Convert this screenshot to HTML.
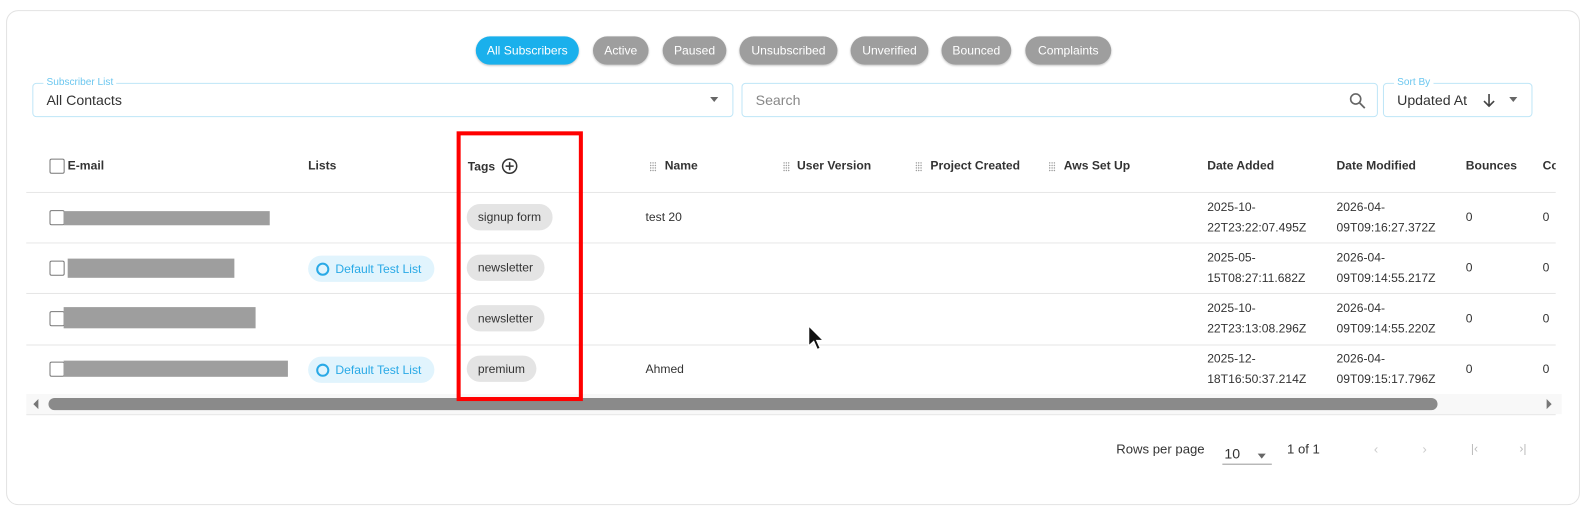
<!DOCTYPE html>
<html><head><meta charset="utf-8"><style>
html,body{margin:0;padding:0;background:#fff;width:1584px;height:513px;overflow:hidden}
#w{position:absolute;left:0;top:0;width:1568px;height:508px;transform:scale(1.0102);transform-origin:0 0;font-family:"Liberation Sans",sans-serif;color:#222}
.a{position:absolute}
.card{left:6px;top:10px;width:1556px;height:488px;border:1px solid #e2e2e2;border-radius:12px}
.chip{top:36px;height:28px;line-height:28px;border-radius:14px;background:#9e9e9e;color:#fff;font-size:12px;text-align:center;box-shadow:0 1px 2px rgba(0,0,0,.25)}
.inp{top:82px;height:34px;border:1px solid #bfe6f7;border-radius:4px;box-sizing:border-box}
.lbl{font-size:10px;color:#6cc7ef;background:#fff;padding:0 3px;top:-7px;position:absolute}
.h{top:157px;font-size:12px;font-weight:bold;color:#333}
.line{height:1px;background:#e6e6e6;left:26px;width:1514px}
.cb{width:13px;height:13px;border:1.5px solid #777;border-radius:2px}
.red{background:#9e9e9e}
.tag{height:26px;line-height:26px;border-radius:13px;background:#e4e4e4;font-size:12px;color:#333;padding:0 11px;left:462px}
.lst{left:305px;height:26px;line-height:26px;border-radius:13px;background:#e1f4fd;color:#29a9e6;font-size:12px;padding:0 13px 0 27px}
.lst:before{content:"";position:absolute;left:8px;top:7px;width:9px;height:9px;border:2px solid #29a9e6;border-radius:50%}
.t{font-size:12px;color:#333}
.d{font-size:12px;color:#333;line-height:20px}
.grip{width:7px;height:10px;background-image:radial-gradient(#999 0.6px,transparent 0.7px);background-size:2.3px 2.5px;top:160px}
</style></head><body><div id="w">
<div class="a card"></div>
<div class="a chip" style="left:471px;width:102px;background:#1ab0ec">All Subscribers</div>
<div class="a chip" style="left:587px;width:55px">Active</div>
<div class="a chip" style="left:656px;width:63px">Paused</div>
<div class="a chip" style="left:732px;width:97px">Unsubscribed</div>
<div class="a chip" style="left:842px;width:77px">Unverified</div>
<div class="a chip" style="left:932px;width:69px">Bounced</div>
<div class="a chip" style="left:1015px;width:85px">Complaints</div>

<div class="a inp" style="left:32px;width:694px"><span class="lbl" style="left:10px">Subscriber List</span><span class="a" style="left:13px;top:8px;font-size:14px;color:#333">All Contacts</span><span class="a" style="right:14px;top:13px;border:4px solid transparent;border-top:5px solid #666;border-bottom:0"></span></div>
<div class="a inp" style="left:734px;width:630px"><span class="a" style="left:13px;top:8px;font-size:14px;color:#888">Search</span>
<svg class="a" style="right:10px;top:8px" width="18" height="18" viewBox="0 0 18 18"><circle cx="7" cy="7" r="5" fill="none" stroke="#666" stroke-width="1.6"/><path d="M11 11l5 5" stroke="#666" stroke-width="1.8"/></svg></div>
<div class="a inp" style="left:1369px;width:148px"><span class="lbl" style="left:10px">Sort By</span><span class="a" style="left:13px;top:8px;font-size:14px;color:#333">Updated At</span>
<svg class="a" style="left:97px;top:9px" width="14" height="15" viewBox="0 0 14 15"><path d="M7 1v12M2 8l5 5 5-5" fill="none" stroke="#444" stroke-width="1.6"/></svg>
<span class="a" style="right:14px;top:13px;border:4px solid transparent;border-top:5px solid #666;border-bottom:0"></span></div>

<div class="a cb" style="left:49px;top:157px"></div>
<div class="a h" style="left:67px">E-mail</div>
<div class="a h" style="left:305px">Lists</div>
<div class="a h" style="left:463px;top:158px">Tags</div>
<svg class="a" style="left:496px;top:156px" width="17" height="17" viewBox="0 0 17 17"><circle cx="8.5" cy="8.5" r="7" fill="none" stroke="#333" stroke-width="1.5"/><path d="M8.5 4.5v8M4.5 8.5h8" stroke="#333" stroke-width="1.5"/></svg>
<div class="a grip" style="left:643px"></div><div class="a h" style="left:658px">Name</div>
<div class="a grip" style="left:775px"></div><div class="a h" style="left:789px">User Version</div>
<div class="a grip" style="left:906px"></div><div class="a h" style="left:921px">Project Created</div>
<div class="a grip" style="left:1038px"></div><div class="a h" style="left:1053px">Aws Set Up</div>
<div class="a h" style="left:1195px">Date Added</div>
<div class="a h" style="left:1323px">Date Modified</div>
<div class="a h" style="left:1451px">Bounces</div>
<div class="a h" style="left:1527px;width:13px;overflow:hidden">Complaints</div>

<div class="a line" style="top:190px"></div>
<div class="a line" style="top:240px"></div>
<div class="a line" style="top:290px"></div>
<div class="a line" style="top:341px"></div>

<div class="a cb" style="left:49px;top:208px"></div><div class="a red" style="left:63px;top:209px;width:204px;height:14px"></div>
<div class="a cb" style="left:49px;top:258px"></div><div class="a red" style="left:67px;top:256px;width:165px;height:19px"></div>
<div class="a cb" style="left:49px;top:308px"></div><div class="a red" style="left:63px;top:304px;width:190px;height:21px"></div>
<div class="a cb" style="left:49px;top:358px"></div><div class="a red" style="left:63px;top:357px;width:222px;height:16px"></div>

<div class="a lst" style="top:253px">Default Test List</div>
<div class="a lst" style="top:353px">Default Test List</div>

<div class="a tag" style="top:202px">signup form</div>
<div class="a tag" style="top:252px">newsletter</div>
<div class="a tag" style="top:302px">newsletter</div>
<div class="a tag" style="top:352px">premium</div>

<div class="a t" style="left:639px;top:208px">test 20</div>
<div class="a t" style="left:639px;top:358px">Ahmed</div>

<div class="a d" style="left:1195px;top:195px">2025-10-<br>22T23:22:07.495Z</div>
<div class="a d" style="left:1323px;top:195px">2026-04-<br>09T09:16:27.372Z</div>
<div class="a d" style="left:1195px;top:245px">2025-05-<br>15T08:27:11.682Z</div>
<div class="a d" style="left:1323px;top:245px">2026-04-<br>09T09:14:55.217Z</div>
<div class="a d" style="left:1195px;top:295px">2025-10-<br>22T23:13:08.296Z</div>
<div class="a d" style="left:1323px;top:295px">2026-04-<br>09T09:14:55.220Z</div>
<div class="a d" style="left:1195px;top:345px">2025-12-<br>18T16:50:37.214Z</div>
<div class="a d" style="left:1323px;top:345px">2026-04-<br>09T09:15:17.796Z</div>
<div class="a t" style="left:1451px;top:208px">0</div><div class="a t" style="left:1527px;top:208px">0</div>
<div class="a t" style="left:1451px;top:258px">0</div><div class="a t" style="left:1527px;top:258px">0</div>
<div class="a t" style="left:1451px;top:308px">0</div><div class="a t" style="left:1527px;top:308px">0</div>
<div class="a t" style="left:1451px;top:358px">0</div><div class="a t" style="left:1527px;top:358px">0</div>

<div class="a" style="left:26px;top:390px;width:1520px;height:20px;background:#f8f8f8"></div>
<div class="a" style="left:33px;top:395px;border:5px solid transparent;border-right:5px solid #777;border-left:0"></div>
<div class="a" style="left:1531px;top:395px;border:5px solid transparent;border-left:5px solid #777;border-right:0"></div>
<div class="a" style="left:48px;top:394px;width:1375px;height:12px;border-radius:6px;background:#8a8a8a"></div>
<div class="a line" style="top:410px"></div>

<div class="a" style="left:452px;top:130px;width:117px;height:259px;border:4px solid #f00"></div>

<div class="a" style="left:1105px;top:437px;font-size:13px;color:#333">Rows per page</div>
<div class="a" style="left:1212px;top:441px;font-size:14px;color:#333">10</div>
<div class="a" style="left:1245px;top:449px;border:4px solid transparent;border-top:5px solid #666;border-bottom:0"></div>
<div class="a" style="left:1210px;top:459px;width:49px;height:1px;background:#999"></div>
<div class="a" style="left:1274px;top:437px;font-size:13px;color:#333">1 of 1</div>
<div class="a" style="left:1360px;top:437px;font-size:13px;color:#ccc">&lsaquo;</div>
<div class="a" style="left:1408px;top:437px;font-size:13px;color:#ccc">&rsaquo;</div>
<div class="a" style="left:1456px;top:437px;font-size:12px;color:#bbb">|&lsaquo;</div>
<div class="a" style="left:1504px;top:437px;font-size:12px;color:#bbb">&rsaquo;|</div>

<svg class="a" style="left:799px;top:321px" width="20" height="28" viewBox="0 0 20 28"><path d="M1.5 1.5v20l5-4.5 3.5 8 3-1.3-3.5-7.7h6.5z" fill="#111" stroke="#fff" stroke-width="1.2"/></svg>
</div></body></html>
